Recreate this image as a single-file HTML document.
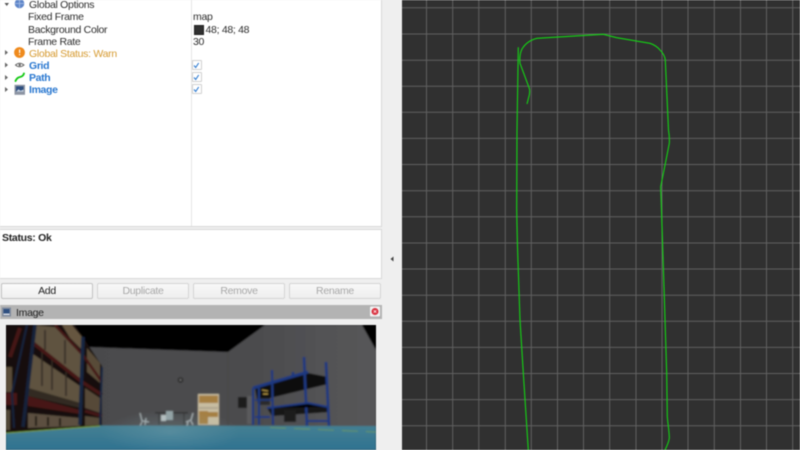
<!DOCTYPE html>
<html><head><meta charset="utf-8"><style>
html,body{margin:0;padding:0;background:#efefef;width:800px;height:450px;overflow:hidden}
#r{position:relative;width:800px;height:450px;overflow:hidden;font-family:"Liberation Sans",sans-serif;font-size:10.5px;letter-spacing:-.3px;color:#2c2c2c;filter:blur(.4px)}
.a{position:absolute;white-space:nowrap}
.t{line-height:12px}
.b{font-weight:bold;color:#2a78d0;letter-spacing:-.35px}
.btn{position:absolute;top:283px;height:14px;width:90px;border:1px solid #d4d4d4;border-radius:2px;background:linear-gradient(#f8f8f8,#eeeeee);text-align:center;line-height:15px;color:#a8a8a8}
.cb{position:absolute;left:192px;width:8px;height:8px;background:#fff;border:1px solid #d0d0d0;border-radius:1px}
</style></head><body><div id="r">
<div class="a" style="left:0;top:0;width:381px;height:226px;background:#fff;border-right:1px solid #d8d8d8;border-bottom:1px solid #d8d8d8"></div>
<div class="a" style="left:191px;top:0;width:1px;height:226px;background:#e6e6e6"></div>

<div class="a t" style="left:29px;top:-1.500px">Global Options</div>
<div class="a t" style="left:28px;top:11px">Fixed Frame</div>
<div class="a t" style="left:28px;top:23.500px">Background Color</div>
<div class="a t" style="left:28px;top:35.500px">Frame Rate</div>
<div class="a t" style="left:29px;top:47.500px;color:#d69a30">Global Status: Warn</div>
<div class="a t b" style="left:29px;top:59.500px">Grid</div>
<div class="a t b" style="left:29px;top:71.500px">Path</div>
<div class="a t b" style="left:29px;top:84px">Image</div>
<div class="a t" style="left:193px;top:11px">map</div>
<div class="a" style="left:194px;top:25px;width:8px;height:8px;background:#303030;border:.5px solid #222"></div>
<div class="a t" style="left:205.500px;top:23.500px">48; 48; 48</div>
<div class="a t" style="left:193px;top:35.500px">30</div>
<div class="cb" style="top:60px"></div><div class="cb" style="top:72px"></div><div class="cb" style="top:84px"></div>

<svg class="a" style="left:0;top:0" width="210" height="100" viewBox="0 0 210 100">
<path d="M4.500 3l4.500 0l-2.250 3z" fill="#555"/>
<path d="M5 50l3 2.500l-3 2.500zM5 62.500l3 2.500l-3 2.500zM5 75l3 2.500l-3 2.500zM5 87l3 2.500l-3 2.500z" fill="#666"/>
<circle cx="19.500" cy="3.500" r="4.800" fill="#5f86c9"/><path d="M15 3.500h9M19.500 -1v9" stroke="#a9c0e6" stroke-width=".8"/>
<circle cx="19.500" cy="52.500" r="5.400" fill="#ef8a1d"/><rect x="19" y="49.500" width="1.200" height="3.500" fill="#fff"/><rect x="19" y="54" width="1.200" height="1.200" fill="#fff"/>
<path d="M15.500 65q4-3.500 8.500 0q-4.500 3.500-8.500 0z" fill="none" stroke="#666" stroke-width="1"/><circle cx="19.700" cy="65" r="1.200" fill="#666"/>
<path d="M15.500 81q1.500-3.500 4.500-4t4-3.500" fill="none" stroke="#12c812" stroke-width="1.900" stroke-linecap="round"/>
<rect x="14.500" y="84.800" width="10.500" height="10" fill="#8d95a3"/><rect x="16" y="86.300" width="7.500" height="5.500" fill="#2e4f80"/><path d="M16 91.800l2.500-2.500l2 1.500l3-1.200v2.200z" fill="#c9d3e0"/>
<path d="M194 65.500l1.700 2l3-4.500M194 77.500l1.700 2l3-4.500M194 89.500l1.700 2l3-4.500" fill="none" stroke="#2a78d0" stroke-width="1.100"/>
</svg>

<div class="a" style="left:0;top:229px;width:381px;height:48px;background:#fff;border-right:1px solid #d8d8d8;border-top:1px solid #d8d8d8;border-bottom:1px solid #d8d8d8"></div>
<div class="a t" style="left:2px;top:232px;font-weight:bold;color:#222">Status: Ok</div>

<div class="btn" style="left:1px;color:#222;border-color:#c2c2c2;background:linear-gradient(#fbfbfb,#efefef)">Add</div>
<div class="btn" style="left:97px">Duplicate</div>
<div class="btn" style="left:193px">Remove</div>
<div class="btn" style="left:289px">Rename</div>

<div class="a" style="left:0;top:305px;width:382px;height:14px;background:#b3b3b3"></div>
<div class="a t" style="left:16px;top:307px;color:#222">Image</div>
<svg class="a" style="left:0;top:305px" width="382" height="14" viewBox="0 0 382 14">
<rect x="2" y="2.500" width="9" height="9" fill="#7f8a9c"/><rect x="3.500" y="4" width="6" height="4.500" fill="#2e4f80"/><rect x="3.500" y="8.500" width="6" height="1.500" fill="#d5dbe5"/>
<rect x="370" y="1.500" width="10" height="10" rx="1" fill="#f1f1f1"/><circle cx="375" cy="6.500" r="3.500" fill="#d9303e"/><path d="M373.700 5.200l2.600 2.600M376.300 5.200l-2.600 2.600" stroke="#fff" stroke-width=".7"/>
</svg>

<svg class="a" style="left:0;top:0" width="390" height="450" viewBox="0 0 390 450">
<defs>
<linearGradient id="fl" x1="0" y1="0" x2="0" y2="1"><stop offset="0" stop-color="#447f92"/><stop offset="1" stop-color="#2f7290"/></linearGradient>
<linearGradient id="wl" x1="0" y1="0" x2="1" y2="0"><stop offset="0" stop-color="#4a4a4c"/><stop offset=".6" stop-color="#4c4c4e"/><stop offset="1" stop-color="#575759"/></linearGradient>
<radialGradient id="gl"><stop offset="0" stop-color="#8fb2ba" stop-opacity=".28"/><stop offset="1" stop-color="#8fb2ba" stop-opacity="0"/></radialGradient>
<filter id="bl"><feGaussianBlur stdDeviation=".7"/></filter>
<clipPath id="cp"><rect x="6" y="325" width="370" height="125"/></clipPath>
</defs>
<g clip-path="url(#cp)"><g filter="url(#bl)">
<rect x="0" y="320" width="390" height="135" fill="#000"/>
<polygon points="88,347 228,352 265,325 362,325 376,350 376,428 88,428" fill="url(#wl)"/>
<path d="M228 352V426" stroke="#444" stroke-width="1"/>

<polygon points="6,325 75,325 102,366 102,428 6,432" fill="#14100d"/>
<polygon points="35,325 55,327 82,355 82,380 33,343" fill="#5f523f"/>
<polygon points="62,325 72,325 82,337 82,350 70,338" fill="#665740"/>
<polygon points="87,348 100,363 100,383 87,372" fill="#584c38"/>
<polygon points="30,352 80,386 80,403 28,388" fill="#5f523f"/>
<path d="M52 360v30M66 372v24M42 352v34M45 330v20M65 340v24" stroke="#332b22" stroke-width="1.500"/>
<polygon points="85,388 100,398 100,413 85,408" fill="#564a38"/>
<polygon points="6,367 12,367 12,392 6,392" fill="#5a4e38"/>
<polygon points="28,388 80,403 80,408 28,396" fill="#332c24"/>
<polygon points="28,413 80,418 80,426 28,428" fill="#5c5040"/>
<path d="M36 416v10M48 417v9M60 418v8" stroke="#241e18" stroke-width="2"/>
<polygon points="85,416 100,418 100,425 85,426" fill="#544937"/>
<polygon points="6,410 10,410 10,430 6,430" fill="#524838"/>
<path d="M55 325L83 355L102 382" stroke="#451712" stroke-width="2.500" fill="none"/>
<path d="M33 343L82 382L102 395" stroke="#451712" stroke-width="3.500" fill="none"/>
<polygon points="28,396 80,410 80,414 28,406" fill="#471712"/>
<path d="M85 411L102 416" stroke="#451712" stroke-width="3"/>
<rect x="6" y="393" width="11" height="12" fill="#471712"/>
<path d="M20 328L10 357" stroke="#451712" stroke-width="4"/>
<path d="M35 325L23 427" stroke="#12233a" stroke-width="3.500"/>
<path d="M27 325L12 393L14 428" stroke="#12233a" stroke-width="2.200" fill="none"/>
<path d="M83 337L80 425" stroke="#132843" stroke-width="3.500"/>
<path d="M102 367L100 425" stroke="#132843" stroke-width="2"/>

<circle cx="180.500" cy="380" r="2.800" fill="#262626"/><circle cx="180.500" cy="380" r="1.200" fill="#6a6a6a"/>
<path d="M140 413l2 8l7 1M146 418l-1 7M142 422l-2 4" stroke="#a8b0b2" stroke-width="1.200" fill="none"/>
<rect x="155" y="412" width="33" height="1.500" fill="#2f2f2f"/><path d="M159 413v12M184 413v12" stroke="#333" stroke-width="1.200"/>
<rect x="166" y="411" width="7" height="9" fill="#93a2a4"/><rect x="161" y="415" width="5" height="6" fill="#b8c0c0"/>
<path d="M193 413l-2 7l-5 2M188 422l-1 4M191 421l2 4" stroke="#b0b6b8" stroke-width="1.200" fill="none"/>

<rect x="198" y="394" width="21" height="31" fill="#c8bda2"/>
<rect x="199" y="395.500" width="19" height="7.500" fill="#a57f42"/>
<rect x="199" y="407" width="19" height="2" fill="#b0a68e"/>
<rect x="199" y="411" width="9" height="13" fill="#a57f42"/><rect x="208" y="412" width="10" height="5" fill="#a57f42"/>
<rect x="238" y="397" width="9" height="11" fill="#1d1d1f"/>
<polygon points="247,396 254,396 254,424 247,424" fill="#5a5a5c"/>

<polygon points="255,388 308,373 328,377 328,384 270,398 258,404" fill="#101010"/>
<polygon points="267,408 308,403 328,407 329,412 272,416" fill="#121212"/>
<rect x="258" y="398" width="12" height="7" fill="#29292a"/><path d="M262 390l6 1M263 394h5" stroke="#c8a84c" stroke-width="1"/>
<rect x="284" y="410" width="12" height="12" fill="#1c1c1c"/>
<path d="M253 388L308 372" stroke="#1c3880" stroke-width="3"/>
<path d="M253 388V425M259 388V425M272 370L273 425" stroke="#1c3880" stroke-width="2.200"/>
<path d="M304 357L307 426M326 362L329 426M293 372V376" stroke="#1c3880" stroke-width="2.600"/>
<path d="M267 408L308 403L328 407M255 417H270M307 421H329" stroke="#1c3880" stroke-width="2"/>
<path d="M255 400H272" stroke="#1c3880" stroke-width="1.500"/>

<polygon points="6,433 100,425.500 376,426 376,450 6,450" fill="url(#fl)"/>
<path d="M6 433L100 426" stroke="#7fa030" stroke-width="1"/>
<path d="M270 427.500L376 432" stroke="#6e9b58" stroke-width=".8" stroke-dasharray="16 8"/>
<ellipse cx="170" cy="432" rx="70" ry="22" fill="url(#gl)"/>
</g></g>
</svg>

<svg class="a" style="left:385px;top:250px" width="12" height="18" viewBox="0 0 12 18"><path d="M8.500 6.500v5l-3-2.500z" fill="#444"/></svg>

<svg class="a" style="left:400px;top:0" width="400" height="450" viewBox="400 0 400 450">
<rect x="402" y="0" width="398" height="450" fill="#303030"/>
<g stroke="#606060" stroke-width="1" fill="none">
<path d="M426.500 0V450M452.700 0V450M478.800 0V450M505.300 0V450M531.300 0V450M557.500 0V450M583.500 0V450M609.700 0V450M636 0V450M662 0V450M688 0V450M714.300 0V450M740.500 0V450M766.500 0V450M792.700 0V450"/>
<path d="M402 7.800H800M402 34H800M402 60.200H800M402 86.200H800M402 112.300H800M402 138.400H800M402 164.500H800M402 190.700H800M402 216.800H800M402 243H800M402 269H800M402 295.200H800M402 321.300H800M402 347.400H800M402 373.500H800M402 399.600H800M402 425.800H800"/>
</g>
<path d="M518.300 47.300L517 130L516.700 208C517 230 517.500 250 518.300 270L520 320L523.300 373L528.300 450" fill="none" stroke="#14d414" stroke-width="1.100"/>
<path d="M527 104L529.300 95C529.800 92 529.800 90 529.300 88.300L520 63.300C519.500 58 520 53 522 49C525 44 530 40 537 38.300L580 35.700L603.300 34.300L616.700 37.700L650 43.300C655 45 658 47.500 660 50C663 53 665 57 665.300 60L668.500 130C669.500 136 669.500 140 669.300 143.300L666.700 156.700L660.700 186.700L661.700 216.700L664.300 296.700L666.700 373.300L667.300 416.700C668 425 669.300 432 669.300 438C669 441 668 444 665 450" fill="none" stroke="#14d414" stroke-width="1.100" stroke-linejoin="round"/>
</svg>
</div></body></html>
